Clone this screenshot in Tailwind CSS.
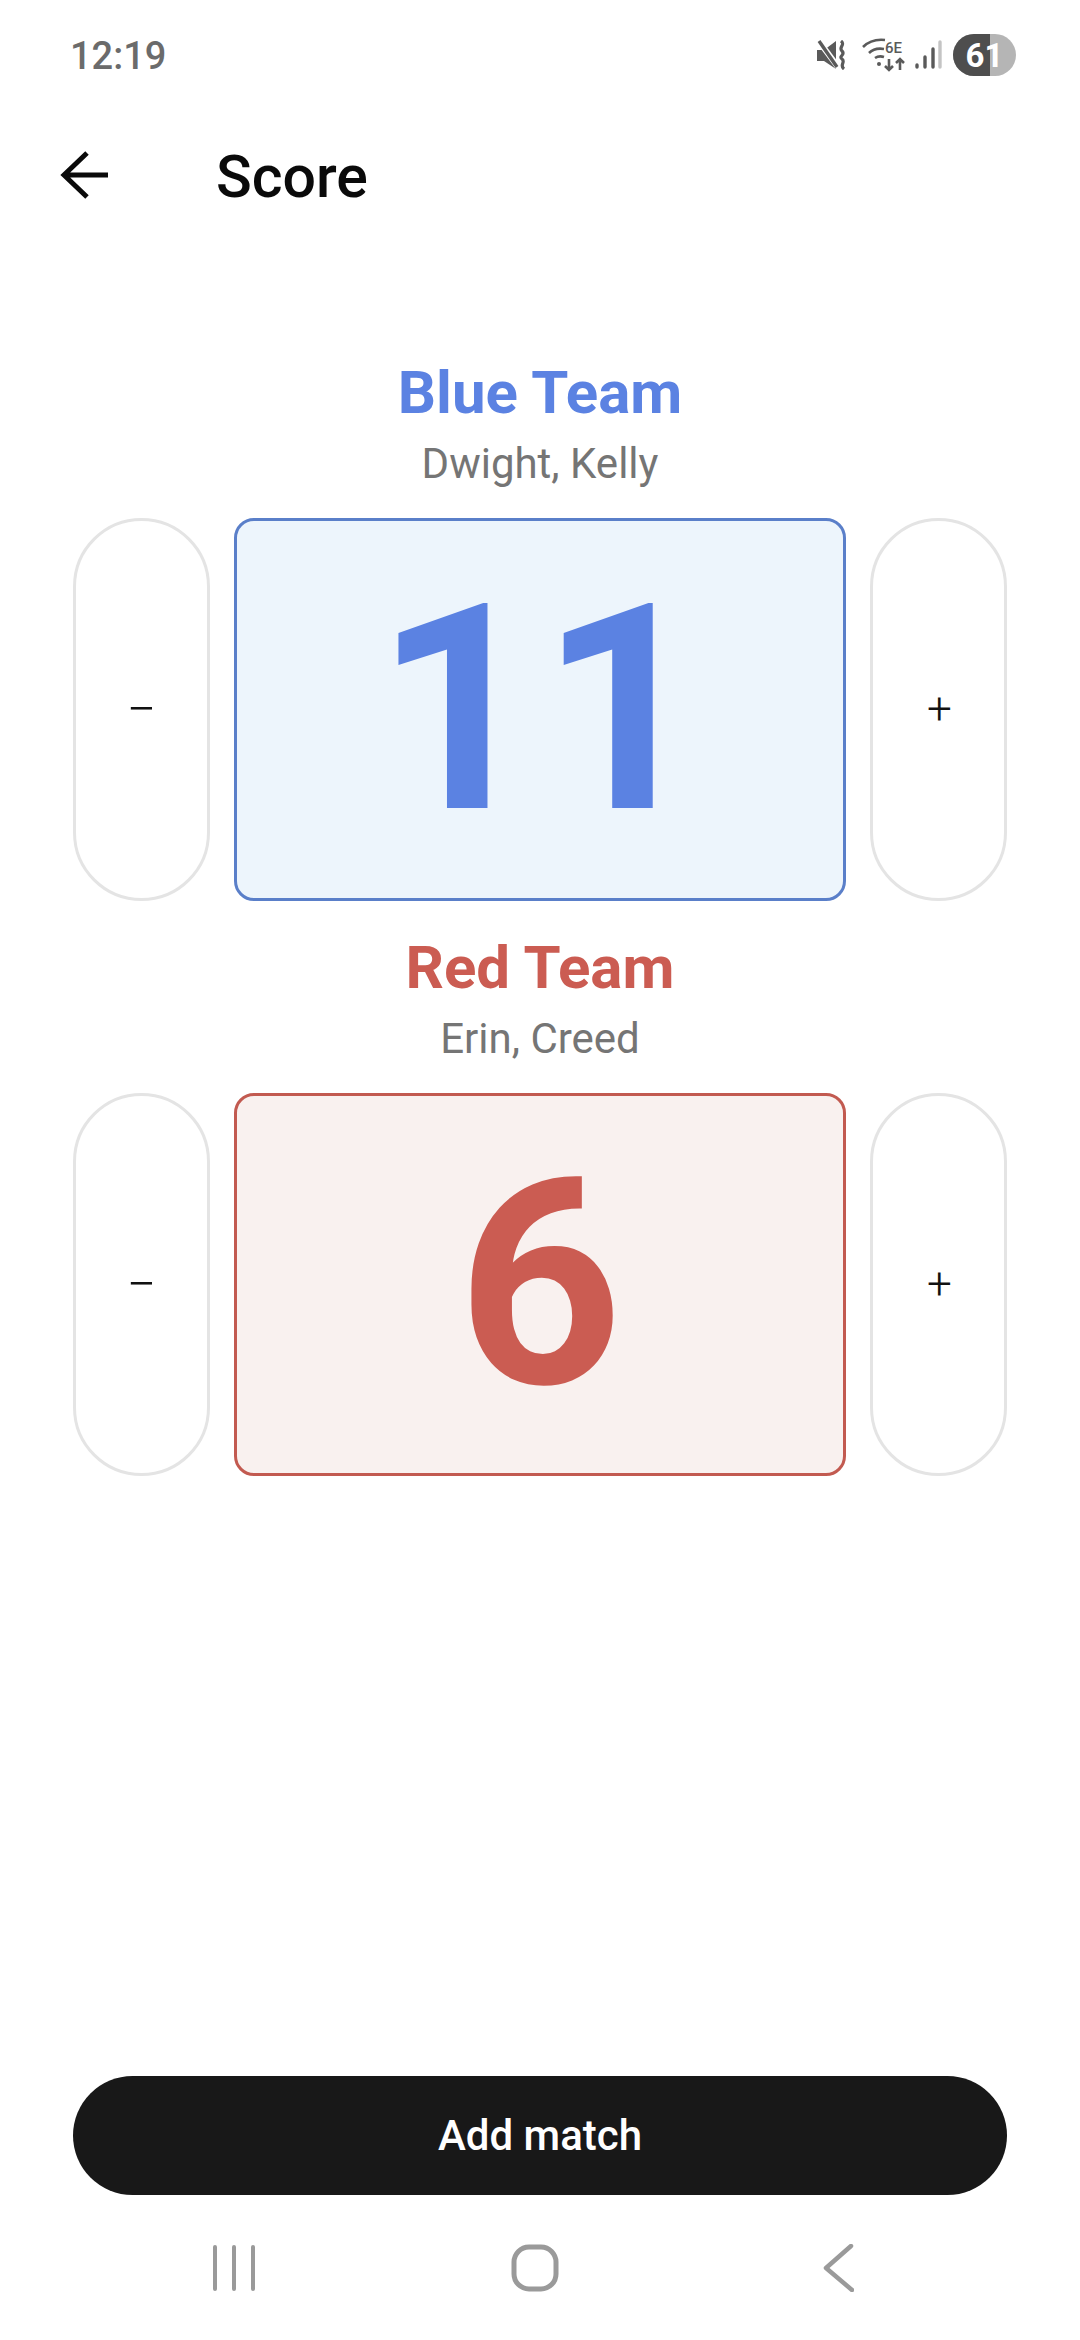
<!DOCTYPE html>
<html lang="en">
<head>
  <meta charset="UTF-8" />
  <meta name="viewport" content="width=device-width, initial-scale=1.0" />
  <title>Score</title>
  <script src="https://cdn.jsdelivr.net/npm/@tailwindcss/browser@4"></script>
</head>
<body class="bg-white font-['Roboto',sans-serif]">
<div class="w-[1080px] h-[2340px] flex flex-col overflow-hidden">

  <!-- status bar -->
  <div class="h-[110px] flex items-center justify-between pl-[70px] pr-[64px]">
    <span class="text-[38px] leading-[48px] font-medium text-[#6b6b6b] mt-[1px]">12:19</span>
    <div class="flex items-center">
      <svg class="w-[30px] h-[30px]" viewBox="0 0 30 30" fill="#5a5a5a">
        <path d="M0 10h7l12-9v28L7 21H0z"/>
        <path d="M1 0l20 27" stroke="#fff" stroke-width="6"/>
        <path d="M2 1l18 26" stroke="#5a5a5a" stroke-width="3.4"/>
        <path d="M24 1c5 4-3 6 1 10s-4 5 0 8 -3 6 2 10" fill="none" stroke="#5a5a5a" stroke-width="3.2"/>
      </svg>
      <svg class="w-[44px] h-[34px] ml-[15px]" viewBox="0 0 44 34" fill="none" stroke="#5a5a5a" stroke-width="2.6">
        <path d="M1 9C7 3 14 1 23 2"/>
        <path d="M7 15c4-4 9-5 15-4"/>
        <path d="M13 20c3-2 6-2 9-1"/>
        <circle cx="17" cy="26" r="2" fill="#5a5a5a" stroke="none"/>
        <path d="M27 21v11M23 28l4 4 4-4M38 32V21M34 25l4-4 4 4"/>
        <text x="23" y="15" font-family="Roboto" font-size="15" font-weight="500" fill="#5a5a5a" stroke="none">6E</text>
      </svg>
      <svg class="w-[28px] h-[30px] ml-[8px]" viewBox="0 0 28 30" fill="none" stroke-width="3.4" stroke-linecap="round">
        <path d="M3 25v2M11 17v10M19 9v18" stroke="#5a5a5a"/>
        <path d="M26 2v25" stroke="#c4c4c4"/>
      </svg>
      <div class="relative ml-[11px] w-[63px] h-[42px] rounded-full overflow-hidden bg-[#b5b5b5]">
        <div class="w-[37px] h-full bg-[#4e4e4e]"></div>
        <span class="absolute inset-0 flex items-center justify-center text-[33px] leading-none font-bold text-white">61</span>
      </div>
    </div>
  </div>

  <!-- header -->
  <div class="h-[130px] flex items-center pl-[60px]">
    <svg class="w-[48px] h-[48px]" viewBox="0 0 48 48" fill="none" stroke="#0a0a0a" stroke-width="5">
      <path d="M48 24H4M27 2L4 24l23 22"/>
    </svg>
    <h1 class="ml-[108px] mt-[3px] text-[59px] leading-[70px] font-medium text-[#0a0a0a]">Score</h1>
  </div>

  <!-- teams -->
  <div class="mt-[118px] px-[73px] flex flex-col gap-[32px]">
    <div class="flex flex-col items-center">
      <div class="text-[60px] leading-[70px] font-bold text-[#5b82e2]">Blue Team</div>
      <div class="mt-[11px] text-[42px] leading-[50px] text-[#757575]">Dwight, Kelly</div>
      <div class="mt-[29px] w-full flex h-[383px] gap-[24px]">
        <button class="w-[137px] rounded-full border-[3px] border-[#e4e4e4] bg-white text-[52px] font-light text-[#111] flex items-center justify-center">−</button>
        <div class="flex-1 rounded-[20px] border-[3px] border-[#5a7fc9] bg-[#edf5fc] flex items-center justify-center text-[288px] leading-none font-bold text-[#5b82e2]">11</div>
        <button class="w-[137px] rounded-full border-[3px] border-[#e4e4e4] bg-white text-[44px] font-light text-[#111] flex items-center justify-center pl-[2px] pb-[2px]">+</button>
      </div>
    </div>
    <div class="flex flex-col items-center">
      <div class="text-[60px] leading-[70px] font-bold text-[#cb5c52]">Red Team</div>
      <div class="mt-[11px] text-[42px] leading-[50px] text-[#757575]">Erin, Creed</div>
      <div class="mt-[29px] w-full flex h-[383px] gap-[24px]">
        <button class="w-[137px] rounded-full border-[3px] border-[#e4e4e4] bg-white text-[52px] font-light text-[#111] flex items-center justify-center">−</button>
        <div class="flex-1 rounded-[20px] border-[3px] border-[#c25a50] bg-[#f9f1ef] flex items-center justify-center text-[288px] leading-none font-bold text-[#cb5c52]">6</div>
        <button class="w-[137px] rounded-full border-[3px] border-[#e4e4e4] bg-white text-[44px] font-light text-[#111] flex items-center justify-center pl-[2px] pb-[2px]">+</button>
      </div>
    </div>
  </div>

  <div class="flex-1"></div>

  <!-- add match -->
  <div class="px-[73px]">
    <button class="w-full h-[119px] rounded-full bg-[#181818] text-white text-[42px] font-medium">Add match</button>
  </div>

  <!-- nav bar -->
  <div class="h-[145px] pt-[49px] pl-[212px] flex items-start">
    <svg class="w-[44px] h-[48px]" viewBox="0 0 44 48" fill="none" stroke="#9a9a9a" stroke-width="4" stroke-linecap="round">
      <path d="M3 3v42M22 3v42M41 3v42"/>
    </svg>
    <svg class="w-[48px] h-[48px] ml-[255px]" viewBox="0 0 48 48" fill="none" stroke="#9a9a9a" stroke-width="5">
      <rect x="3" y="3" width="42" height="42" rx="15"/>
    </svg>
    <svg class="w-[31px] h-[48px] ml-[264px]" viewBox="0 0 31 48" fill="none" stroke="#9a9a9a" stroke-width="4.5" stroke-linecap="round" stroke-linejoin="round">
      <path d="M28 2L3 24l26 22"/>
    </svg>
  </div>
</div>
</body>
</html>
